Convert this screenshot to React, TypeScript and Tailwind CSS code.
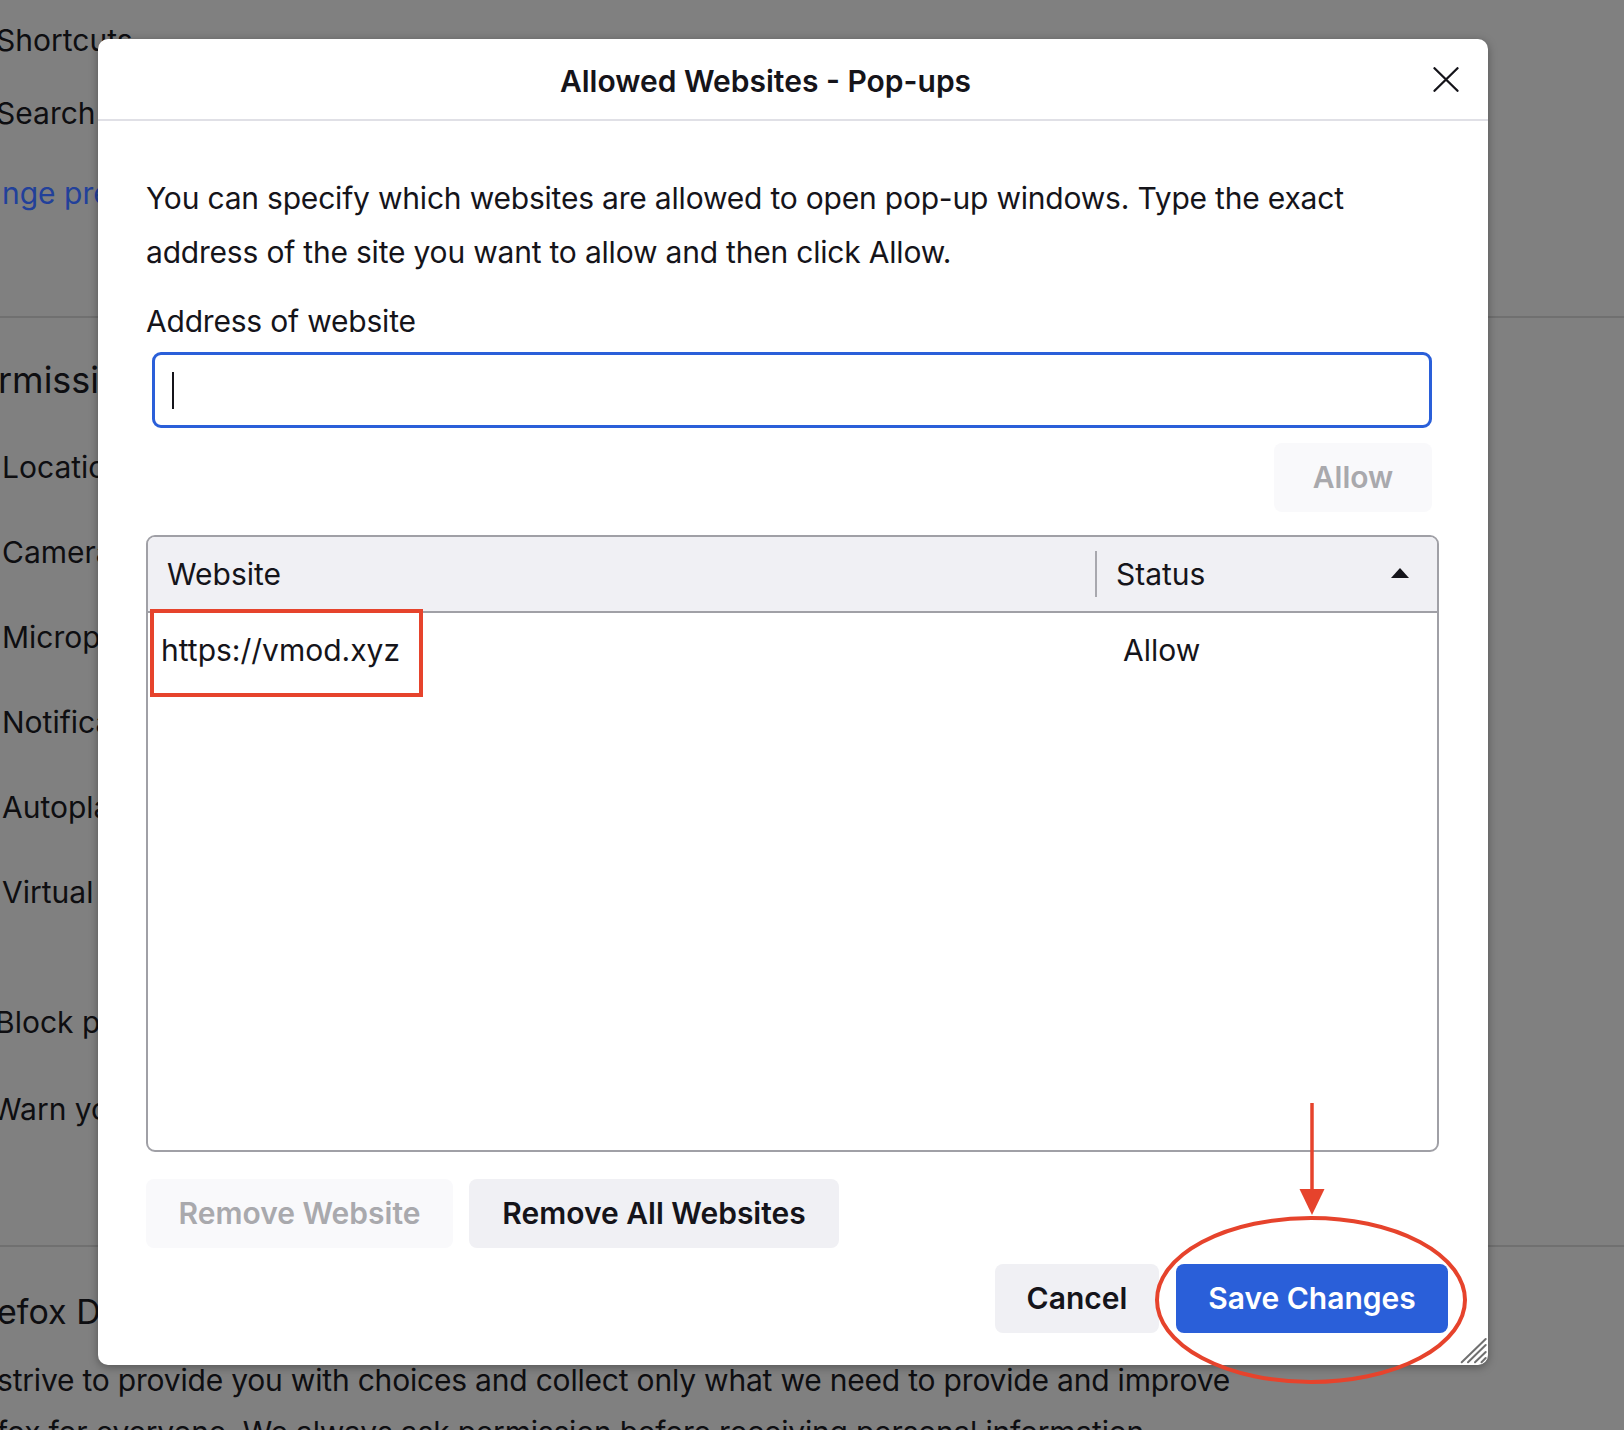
import React from "react";

const PERMISSION_ROWS = ["Location", "Camera", "Microphone", "Notifications", "Autoplay", "Virtual Reality"];

function CloseIcon() {
  return (
    <svg width="26" height="25" viewBox="0 0 26 25" fill="none" stroke="#15141a" strokeWidth="2.3" strokeLinecap="round">
      <path d="M1.5 1.2L24.5 23.8M24.5 1.2L1.5 23.8" />
    </svg>
  );
}

function ResizeGrip() {
  return (
    <svg width="30" height="30" viewBox="0 0 30 30" stroke="#707070" strokeWidth="2" strokeLinecap="round">
      <path d="M3.7 27.3L27.7 4M10 27.3L27.7 10M17 27.3L27.7 17M23.5 27.3L27.7 23" />
    </svg>
  );
}

// red markup drawn on top of the screenshot
function Annotations() {
  return (
    <svg
      className="absolute left-0 top-0 pointer-events-none"
      width="1624"
      height="1430"
      viewBox="0 0 1624 1430"
      fill="none"
    >
      <rect x="152" y="611" width="269" height="84" stroke="#e6432c" strokeWidth="4" />
      <ellipse cx="1311" cy="1300" rx="154" ry="82" stroke="#e6432c" strokeWidth="4" />
      <line x1="1312" y1="1103" x2="1312" y2="1195" stroke="#e6432c" strokeWidth="3.5" />
      <polygon points="1299.5,1189 1324.5,1189 1312,1215" fill="#e6432c" />
    </svg>
  );
}

function BackgroundPage() {
  return (
    <div className="flex flex-col text-[30px] text-[#0e0e11] whitespace-nowrap">
      <div className="mt-[20px] ml-[-4px] leading-[40px]">Shortcuts</div>
      <div className="mt-[33px] ml-[-4px] leading-[40px]">Search</div>
      <div className="mt-[40px] ml-[2px] leading-[40px] text-[#22409a]">nge preferences for search engine suggestions</div>
      <div className="mt-[103px] h-[2px] bg-[#707070]" />
      <div className="mt-[37px] ml-[-2px] leading-[50px] text-[36px]">rmissions</div>
      <div className="mt-[42px] flex flex-col gap-[45px] pl-[2px]">
        {PERMISSION_ROWS.map((r) => (
          <div key={r} className="leading-[40px]">{r}</div>
        ))}
      </div>
      <div className="mt-[90px] ml-[-5px] leading-[40px]">Block pop-up windows</div>
      <div className="mt-[47px] ml-[-8px] leading-[40px]">Warn you when websites try to install add-ons</div>
      <div className="mt-[116px] h-[2px] bg-[#707070]" />
      <div className="mt-[40px] ml-[-3px] leading-[50px] text-[34px]">efox Data Collection and Use</div>
      <div className="mt-[17px] ml-[-3px] leading-[52px] tracking-[-0.2px]">
        strive to provide you with choices and collect only what we need to provide and improve
      </div>
      <div className="ml-[-3px] leading-[52px] tracking-[-0.2px]">
        fox for everyone. We always ask permission before receiving personal information.
      </div>
    </div>
  );
}

function Dialog() {
  return (
    <div className="absolute left-[98px] top-[39px] w-[1390px] h-[1326px] bg-white rounded-[10px] overflow-hidden shadow-[0_2px_10px_rgba(0,0,0,0.35)] flex flex-col text-[#15141a] text-[30px]">
      {/* header */}
      <div className="h-[82px] pt-[4px] border-b-2 border-[#e0e0e6] flex items-center shrink-0">
        <div className="flex-1 flex justify-center">
          <h1 className="font-semibold text-[30px] leading-[40px]">Allowed Websites - Pop-ups</h1>
        </div>
        <button className="w-[26px] h-[25px] mr-[29px] mb-[4px] flex items-center justify-center">
          <CloseIcon />
        </button>
      </div>

      <div className="flex flex-col pl-[48px]">
        <p className="mt-[50px] leading-[54px] tracking-[-0.2px]">
          You can specify which websites are allowed to open pop-up windows. Type the exact
          <br />
          address of the site you want to allow and then click Allow.
        </p>
        <label className="mt-[22px] leading-[40px] tracking-[-0.2px]">Address of website</label>
        <div className="mt-[11px] ml-[6px] w-[1280px] h-[76px] border-[3px] border-[#2a5fd9] rounded-[9px] flex items-center pl-[17px]">
          <div className="w-[2px] h-[37px] bg-[#15141a]" />
        </div>
        <div className="mt-[15px] w-[1286px] flex justify-end">
          <button className="w-[158px] h-[69px] rounded-[8px] bg-[#f9f9fb] text-[#a9a9ad] font-semibold">Allow</button>
        </div>

        {/* site list */}
        <div className="mt-[23px] w-[1293px] h-[617px] border-2 border-[#a0a0a6] rounded-[9px] overflow-hidden flex flex-col">
          <div className="h-[76px] bg-[#f0f0f4] border-b-2 border-[#a0a0a6] flex items-center shrink-0">
            <div className="w-[947px] pl-[19px] leading-[40px]">Website</div>
            <div className="w-[2px] h-[46px] bg-[#a8a8ae]" />
            <div className="flex-1 pl-[19px] leading-[40px]">Status</div>
            <svg width="18" height="10" viewBox="0 0 18 10" className="mr-[28px] mb-[2px]">
              <polygon points="0,10 18,10 9,0" fill="#15141a" />
            </svg>
          </div>
          <div className="h-[74px] flex items-center">
            <div className="w-[962px] pl-[13px] leading-[40px]">https://vmod.xyz</div>
            <div className="pl-[13px] leading-[40px]">Allow</div>
          </div>
        </div>

        <div className="mt-[27px] flex gap-[16px]">
          <button className="w-[307px] h-[69px] rounded-[8px] bg-[#f9f9fb] text-[#a9a9ad] font-semibold">Remove Website</button>
          <button className="w-[370px] h-[69px] rounded-[8px] bg-[#f0f0f4] font-semibold">Remove All Websites</button>
        </div>

        <div className="mt-[16px] w-[1302px] flex justify-end gap-[17px]">
          <button className="w-[164px] h-[69px] rounded-[8px] bg-[#f0f0f4] font-semibold">Cancel</button>
          <button className="w-[272px] h-[69px] rounded-[8px] bg-[#2a5fd9] text-white font-semibold">Save Changes</button>
        </div>
      </div>

      <div className="absolute right-0 bottom-0">
        <ResizeGrip />
      </div>
    </div>
  );
}

export default function App() {
  return (
    <div className="relative w-[1624px] h-[1430px] overflow-hidden bg-[#808080] font-['Inter','Noto_Sans',sans-serif]">
      <BackgroundPage />
      <Dialog />
      <Annotations />
    </div>
  );
}
